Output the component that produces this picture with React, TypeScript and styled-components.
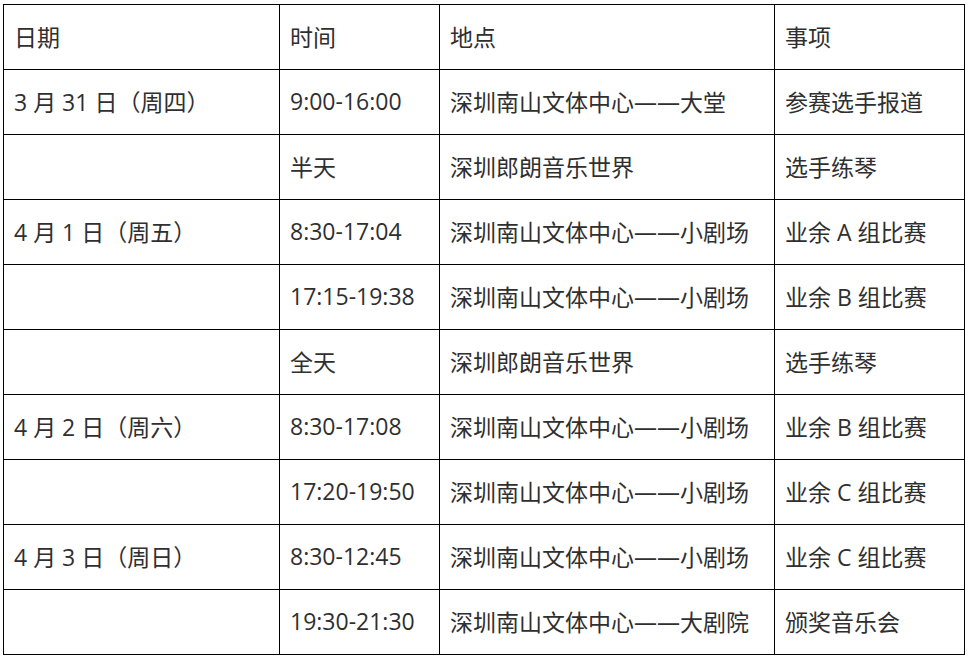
import React from "react";
import styled, { createGlobalStyle } from "styled-components";

type Row = {
  date: string;
  time: string;
  place: string;
  item: string;
};

const rows: Row[] = [
  { date: "3 月 31 日（周四）", time: "9:00-16:00", place: "深圳南山文体中心——大堂", item: "参赛选手报道" },
  { date: "", time: "半天", place: "深圳郎朗音乐世界", item: "选手练琴" },
  { date: "4 月 1 日（周五）", time: "8:30-17:04", place: "深圳南山文体中心——小剧场", item: "业余 A 组比赛" },
  { date: "", time: "17:15-19:38", place: "深圳南山文体中心——小剧场", item: "业余 B 组比赛" },
  { date: "", time: "全天", place: "深圳郎朗音乐世界", item: "选手练琴" },
  { date: "4 月 2 日（周六）", time: "8:30-17:08", place: "深圳南山文体中心——小剧场", item: "业余 B 组比赛" },
  { date: "", time: "17:20-19:50", place: "深圳南山文体中心——小剧场", item: "业余 C 组比赛" },
  { date: "4 月 3 日（周日）", time: "8:30-12:45", place: "深圳南山文体中心——小剧场", item: "业余 C 组比赛" },
  { date: "", time: "19:30-21:30", place: "深圳南山文体中心——大剧院", item: "颁奖音乐会" },
];

const GlobalStyle = createGlobalStyle`
  body {
    margin: 0;
    background: #ffffff;
  }
`;

const Page = styled.div`
  padding: 4px 0 0 3px;
`;

const Table = styled.table`
  border-collapse: collapse;
  table-layout: fixed;
  width: 961px;
  font-family: "Open Sans", "Noto Sans CJK SC", sans-serif;
  font-size: 23px;
  color: #2f2f2f;
`;

const Cell = styled.td<{ $width?: number }>`
  border: 1px solid #000000;
  height: 65px;
  padding: 0 0 2px 10px;
  box-sizing: border-box;
  vertical-align: middle;
  white-space: nowrap;
  width: ${(p) => (p.$width ? `${p.$width}px` : "auto")};
`;

const HeadCell = styled(Cell).attrs({ as: "th" })`
  font-weight: 400;
  text-align: left;
`;

const App: React.FC = () => {
  return (
    <>
      <GlobalStyle />
      <Page>
        <Table>
          <thead>
            <tr>
              <HeadCell $width={276}>日期</HeadCell>
              <HeadCell $width={160}>时间</HeadCell>
              <HeadCell $width={335}>地点</HeadCell>
              <HeadCell $width={190}>事项</HeadCell>
            </tr>
          </thead>
          <tbody>
            {rows.map((r, i) => (
              <tr key={i}>
                <Cell>{r.date}</Cell>
                <Cell>{r.time}</Cell>
                <Cell>{r.place}</Cell>
                <Cell>{r.item}</Cell>
              </tr>
            ))}
          </tbody>
        </Table>
      </Page>
    </>
  );
};

export default App;
